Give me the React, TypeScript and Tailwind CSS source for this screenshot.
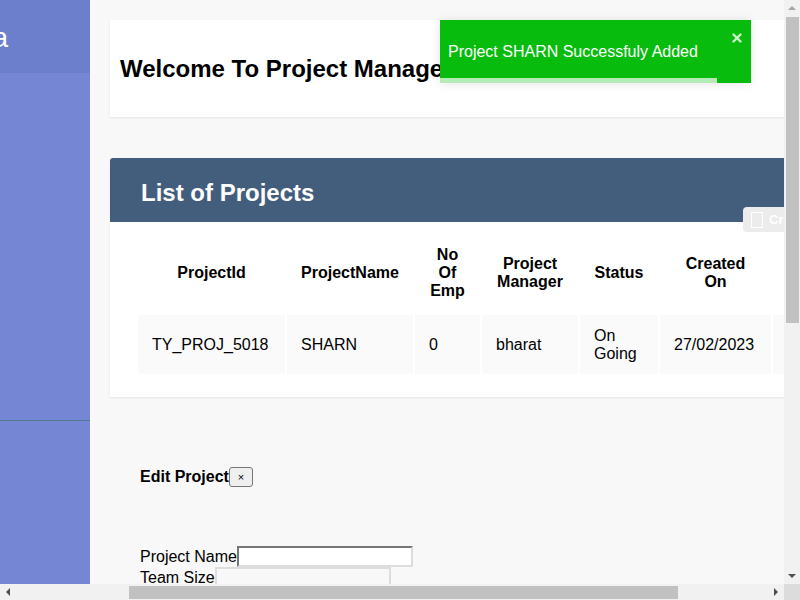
import { X } from "lucide-react";

const headers = ["ProjectId", "ProjectName", "No Of Emp", "Project Manager", "Status", "Created On", "Actions"];
const widths = ["w-[147px]", "w-[126px]", "w-[65px]", "w-[96px]", "w-[78px]", "w-[111px]", "w-[200px]"];
const row = ["TY_PROJ_5018", "SHARN", "0", "bharat", "On Going", "27/02/2023", ""];

function Sidebar() {
  return (
    <div className="flex h-full w-[90px] shrink-0 flex-col bg-[#7486d4]">
      <div className="flex h-[73px] justify-end overflow-hidden bg-[#6b7fcc]">
        <span className="mr-[82px] mt-[22px] shrink-0 whitespace-nowrap font-['Liberation_Sans',Arial,sans-serif] text-[28px] leading-[32px] text-white">
          Harmonia
        </span>
      </div>
      <div className="mt-[347px] h-px bg-[#4b7a8f]" />
    </div>
  );
}

function Toast() {
  return (
    <div className="absolute left-[350px] top-[20px] flex h-[63px] w-[311px] flex-col bg-[#07bc0c] shadow-[0_1px_10px_rgba(0,0,0,0.1)]">
      <div className="flex flex-1 items-start justify-between pl-2 pr-[7px]">
        <span className="mt-[22px] text-[16px] leading-5 text-white">
          Project SHARN Successfuly Added
        </span>
        <X className="mt-[11px] h-[14px] w-[14px] text-white opacity-80" strokeWidth={4} />
      </div>
      <div className="h-[5px] w-[277px] bg-white/70" />
    </div>
  );
}

function CreateButton() {
  return (
    <div className="absolute left-[653px] top-[207px] flex h-[25px] w-[80px] items-center gap-[6px] rounded-sm bg-[#ececec] pl-2">
      <span className="h-[16px] w-[12px] shrink-0 border border-white" />
      <span className="text-[13px] font-bold text-white">Create</span>
    </div>
  );
}

export default function App() {
  return (
    <div
      className="flex h-[600px] w-[800px] flex-col overflow-hidden bg-[#f8f8f8] text-black"
      style={{ fontFamily: '"Liberation Sans", Arial, sans-serif' }}
    >
      <div className="flex min-h-0 flex-1">
        <Sidebar />
        <div className="relative min-w-0 flex-1 overflow-hidden">
          <div className="w-[900px] pl-5 pt-5">
            <div className="flex h-[97px] items-center bg-white pl-[10px] shadow-[0_1px_2px_rgba(0,0,0,0.08)]">
              <h1 className="whitespace-nowrap text-[24px] font-bold">Welcome To Project Management System</h1>
            </div>

            <div className="mt-[41px] bg-white shadow-[0_1px_2px_rgba(0,0,0,0.08)]">
              <div className="flex h-[64px] items-center rounded-t-[3px] bg-[#435d7d] pl-[31px] pt-[6px]">
                <h2 className="text-[24px] font-bold text-white">List of Projects</h2>
              </div>
              <div className="pb-[21px] pl-[26px] pt-[9px]">
                <table className="w-[839px] table-fixed border-separate border-spacing-[2px] text-[16px]">
                  <thead>
                    <tr>
                      {headers.map((h, i) => (
                        <th key={h} className={`${widths[i]} h-[80px] px-3 text-center font-bold leading-[18px]`}>
                          {h === "No Of Emp" ? (
                            <>
                              No
                              <br />
                              Of
                              <br />
                              Emp
                            </>
                          ) : h === "Project Manager" ? (
                            <>
                              Project
                              <br />
                              Manager
                            </>
                          ) : h === "Created On" ? (
                            <>
                              Created
                              <br />
                              On
                            </>
                          ) : (
                            h
                          )}
                        </th>
                      ))}
                    </tr>
                  </thead>
                  <tbody>
                    <tr>
                      {row.map((c, i) => (
                        <td key={i} className={`${widths[i]} h-[59px] bg-[#fafafa] px-[14px] leading-[18px]`}>
                          {c === "On Going" ? (
                            <>
                              On
                              <br />
                              Going
                            </>
                          ) : (
                            c
                          )}
                        </td>
                      ))}
                    </tr>
                  </tbody>
                </table>
              </div>
            </div>

            <div className="pl-[30px] pt-[68px] text-[16px]">
              <div className="flex items-center">
                <span className="font-bold">Edit Project</span>
                <button className="flex h-[20px] w-[24px] items-center justify-center rounded-[3px] border border-[#767676] bg-[#efefef] text-[11px] leading-none">
                  ×
                </button>
              </div>
              <div className="mt-[57px] flex items-center leading-[20px]">
                <span>Project Name</span>
                <input className="h-[21px] w-[176px] border-2 border-t-[#767676] border-l-[#767676] border-r-[#ddd] border-b-[#ddd] bg-white" />
              </div>
              <div className="flex items-center leading-[20px]">
                <span>Team Size</span>
                <input className="h-[21px] w-[176px] border-2 border-[#ddd] bg-[#f8f8f8]" />
              </div>
            </div>
          </div>
          <Toast />
          <CreateButton />
        </div>
        <div className="flex w-4 shrink-0 flex-col items-center bg-[#f1f1f1]">
          <div className="mt-[6px] h-0 w-0 border-x-[4px] border-b-[4px] border-x-transparent border-b-[#a3a3a3]" />
          <div className="mt-[7px] h-[306px] w-[13px] bg-[#c1c1c1]" />
          <div className="flex-1" />
          <div className="mb-[6px] h-0 w-0 border-x-[4px] border-t-[4px] border-x-transparent border-t-[#505050]" />
        </div>
      </div>
      <div className="flex h-4 shrink-0">
        <div className="flex flex-1 items-center bg-[#f1f1f1]">
          <div className="ml-[6px] h-0 w-0 border-y-[4px] border-r-[4px] border-y-transparent border-r-[#505050]" />
          <div className="ml-[119px] h-[13px] w-[549px] bg-[#c1c1c1]" />
          <div className="flex-1" />
          <div className="mr-[6px] h-0 w-0 border-y-[4px] border-l-[4px] border-y-transparent border-l-[#505050]" />
        </div>
        <div className="w-4 bg-[#dcdcdc]" />
      </div>
    </div>
  );
}
